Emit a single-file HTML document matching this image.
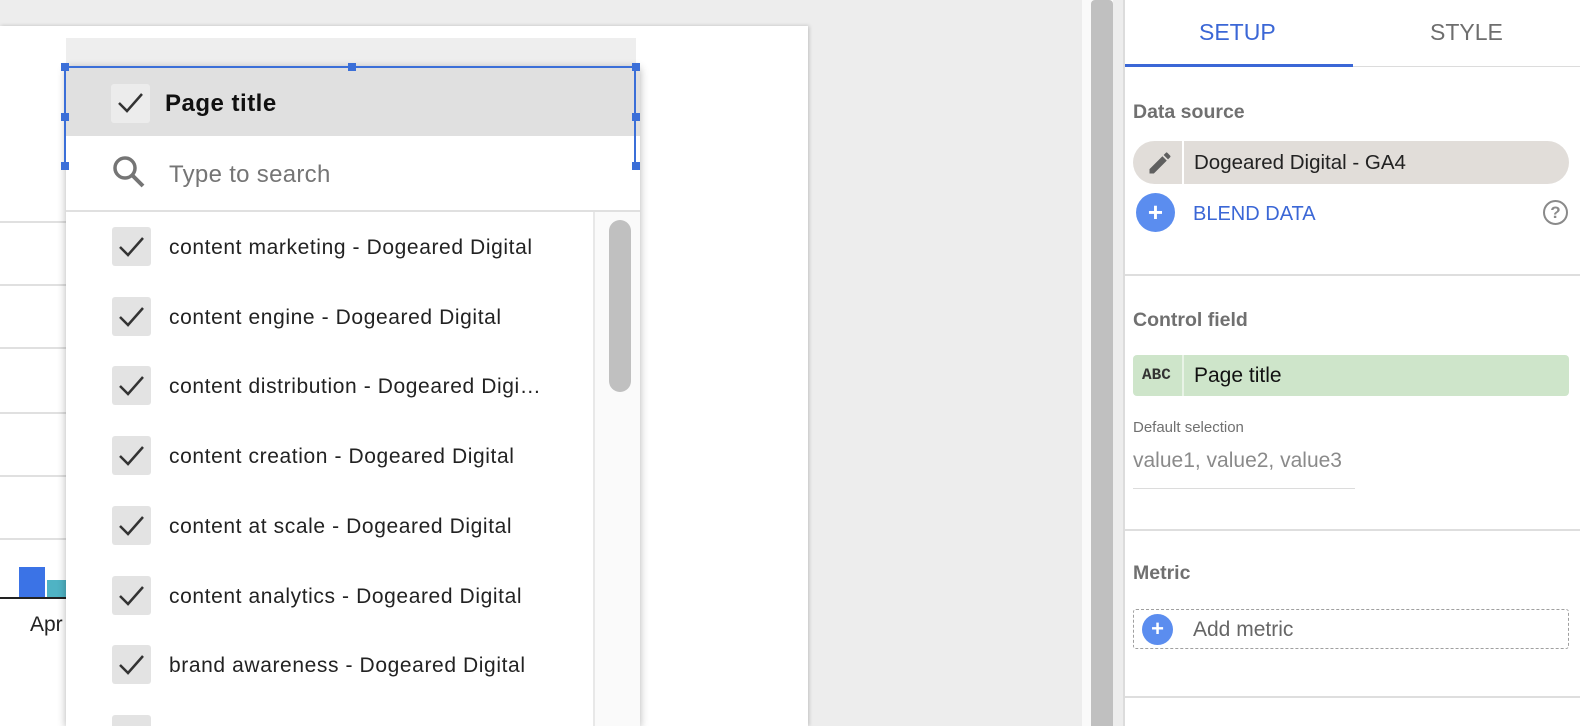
<!DOCTYPE html>
<html><head><meta charset="utf-8"><style>
*{margin:0;padding:0;box-sizing:border-box}
html,body{width:1580px;height:726px;overflow:hidden}
body{background:#ededed;font-family:"Liberation Sans",Arial,sans-serif;position:relative}
.a{position:absolute}
.canvas{left:0;top:26px;width:808px;height:700px;background:#fff;box-shadow:1px 0 4px rgba(0,0,0,.2)}
.hl{left:0;width:70px;height:2px;background:#e0e0e0}
.dd{left:66px;top:66px;width:574px;height:660px;background:#fff;box-shadow:0 2px 8px rgba(0,0,0,.3)}
.cb{width:39px;height:39px;background:#e3e3e3;border-radius:3px}
.item{left:112px;height:39px}
.item span{position:absolute;left:57px;top:9px;font-size:21px;letter-spacing:.6px;color:#222;white-space:nowrap}
.h{width:8px;height:8px;background:#3b6fd8}
.panel{left:1123px;top:0;width:457px;height:726px;background:#fff;border-left:2px solid #dcdcdc}
.lbl{font-size:19.5px;font-weight:bold;color:#707070}
.div{left:0;width:457px;height:2px;background:#dedede}
</style></head><body>
<div class="a canvas"></div>
<div class="a hl" style="top:221px"></div>
<div class="a hl" style="top:284px"></div>
<div class="a hl" style="top:347px"></div>
<div class="a hl" style="top:412px"></div>
<div class="a hl" style="top:475px"></div>
<div class="a hl" style="top:538px"></div>
<div class="a" style="left:19px;top:567px;width:26px;height:31px;background:#3b73e6"></div>
<div class="a" style="left:47px;top:580px;width:22px;height:18px;background:#4fb3c4"></div>
<div class="a" style="left:0;top:597px;width:70px;height:2px;background:#222"></div>
<div class="a" style="left:30px;top:613px;font-size:21px;color:#222">Apr</div>

<div class="a" style="left:66px;top:38px;width:570px;height:30px;background:#eeeeee"></div>
<div class="a dd">
  <div class="a" style="left:0;top:0;width:574px;height:70px;background:#e0e0e0"></div>
  <div class="a cb" style="left:45px;top:18px;background:#ececec"></div>
  <svg class="a" style="left:50px;top:24px" width="30" height="26" viewBox="0 0 30 26"><path d="M3 13 L11 21 L26 4" fill="none" stroke="#333" stroke-width="2.5"/></svg>
  <div class="a" style="left:99px;top:24px;font-size:24px;letter-spacing:.5px;font-weight:bold;color:#111">Page title</div>
  <svg class="a" style="left:45px;top:88px" width="36" height="36" viewBox="0 0 36 36"><circle cx="14" cy="14" r="10" fill="none" stroke="#757575" stroke-width="3.5"/><path d="M21 21 L32 32" stroke="#757575" stroke-width="4"/></svg>
  <div class="a" style="left:103px;top:95px;font-size:24px;letter-spacing:.3px;color:#757575">Type to search</div>
  <div class="a" style="left:0;top:144px;width:574px;height:2px;background:#e0e0e0"></div>
  <div class="a" style="left:527px;top:146px;width:47px;height:540px;background:#fafafa;border-left:2px solid #e8e8e8"></div>
  <div class="a" style="left:543px;top:154px;width:22px;height:172px;background:#c0c0c0;border-radius:11px"></div>
</div>
<div class="a" style="left:64px;top:66px;width:572px;height:102px;border:2px solid #3b6fd8;border-bottom:none"></div>
<div class="a h" style="left:61px;top:63px"></div><div class="a h" style="left:348px;top:63px"></div><div class="a h" style="left:632px;top:63px"></div>
<div class="a h" style="left:61px;top:113px"></div><div class="a h" style="left:632px;top:113px"></div>
<div class="a h" style="left:61px;top:162px"></div><div class="a h" style="left:632px;top:162px"></div>

<div class="a item" style="top:227px"><div class="a cb"></div><svg class="a" style="left:5px;top:7px" width="30" height="26"><path d="M3 13 L11 21 L26 4" fill="none" stroke="#333" stroke-width="2.5"/></svg><span>content marketing - Dogeared Digital</span></div>
<div class="a item" style="top:297px"><div class="a cb"></div><svg class="a" style="left:5px;top:7px" width="30" height="26"><path d="M3 13 L11 21 L26 4" fill="none" stroke="#333" stroke-width="2.5"/></svg><span>content engine - Dogeared Digital</span></div>
<div class="a item" style="top:366px"><div class="a cb"></div><svg class="a" style="left:5px;top:7px" width="30" height="26"><path d="M3 13 L11 21 L26 4" fill="none" stroke="#333" stroke-width="2.5"/></svg><span>content distribution - Dogeared Digi…</span></div>
<div class="a item" style="top:436px"><div class="a cb"></div><svg class="a" style="left:5px;top:7px" width="30" height="26"><path d="M3 13 L11 21 L26 4" fill="none" stroke="#333" stroke-width="2.5"/></svg><span>content creation - Dogeared Digital</span></div>
<div class="a item" style="top:506px"><div class="a cb"></div><svg class="a" style="left:5px;top:7px" width="30" height="26"><path d="M3 13 L11 21 L26 4" fill="none" stroke="#333" stroke-width="2.5"/></svg><span>content at scale - Dogeared Digital</span></div>
<div class="a item" style="top:576px"><div class="a cb"></div><svg class="a" style="left:5px;top:7px" width="30" height="26"><path d="M3 13 L11 21 L26 4" fill="none" stroke="#333" stroke-width="2.5"/></svg><span>content analytics - Dogeared Digital</span></div>
<div class="a item" style="top:645px"><div class="a cb"></div><svg class="a" style="left:5px;top:7px" width="30" height="26"><path d="M3 13 L11 21 L26 4" fill="none" stroke="#333" stroke-width="2.5"/></svg><span>brand awareness - Dogeared Digital</span></div>
<div class="a item" style="top:715px"><div class="a cb"></div></div>

<div class="a" style="left:1082px;top:0;width:31px;height:726px;background:#fafafa"></div>
<div class="a" style="left:1091px;top:0;width:22px;height:726px;background:#c0c0c0;border-radius:4px 4px 0 0"></div>

<div class="a panel">
  <div class="a" style="left:74px;top:19px;font-size:23px;color:#3b67d6">SETUP</div>
  <div class="a" style="left:305px;top:19px;font-size:23px;color:#6e6e6e">STYLE</div>
  <div class="a" style="left:0;top:66px;width:457px;height:1px;background:#dcdcdc"></div>
  <div class="a" style="left:0;top:64px;width:228px;height:3px;background:#3b67d6"></div>
  <div class="a lbl" style="left:8px;top:101px">Data source</div>
  <div class="a" style="left:8px;top:141px;width:436px;height:43px;background:#e1ddd9;border-radius:22px"></div>
  <div class="a" style="left:57px;top:141px;width:2px;height:43px;background:#fff"></div>
  <svg class="a" style="left:21px;top:149px" width="28" height="28" viewBox="0 0 24 24"><path d="M3 17.25V21h3.75L17.81 9.94l-3.75-3.75L3 17.25zM20.71 7.04a1 1 0 000-1.41l-2.34-2.34a1 1 0 00-1.41 0l-1.83 1.83 3.75 3.75 1.83-1.83z" fill="#5f5f5f"/></svg>
  <div class="a" style="left:69px;top:151px;font-size:20.5px;color:#222">Dogeared Digital - GA4</div>
  <div class="a" style="left:11px;top:193px;width:39px;height:39px;border-radius:50%;background:#5b8def;color:#fff;font-size:26px;font-weight:bold;text-align:center;line-height:38px">+</div>
  <div class="a" style="left:68px;top:203px;font-size:20px;color:#3b67d6">BLEND DATA</div>
  <div class="a" style="left:418px;top:200px;width:25px;height:25px;border:2px solid #8a8a8a;border-radius:50%;color:#8a8a8a;font-size:17px;font-weight:bold;text-align:center;line-height:21px">?</div>
  <div class="a div" style="top:274px"></div>
  <div class="a lbl" style="left:8px;top:309px">Control field</div>
  <div class="a" style="left:8px;top:355px;width:436px;height:41px;background:#cee5ca;border-radius:4px"></div>
  <div class="a" style="left:57px;top:355px;width:2px;height:41px;background:#e8f3e6"></div>
  <div class="a" style="left:17px;top:366px;font-size:16px;font-weight:bold;color:#333;font-family:'Liberation Mono',monospace">ABC</div>
  <div class="a" style="left:69px;top:364px;font-size:21px;color:#111">Page title</div>
  <div class="a" style="left:8px;top:419px;font-size:15px;color:#707070">Default selection</div>
  <div class="a" style="left:8px;top:449px;font-size:21px;color:#8a8a8a">value1, value2, value3</div>
  <div class="a" style="left:8px;top:488px;width:222px;height:1px;background:#dcdcdc"></div>
  <div class="a div" style="top:529px"></div>
  <div class="a lbl" style="left:8px;top:562px">Metric</div>
  <div class="a" style="left:8px;top:609px;width:436px;height:40px;border:1.5px dashed #a0a0a0;border-radius:3px"></div>
  <div class="a" style="left:17px;top:614px;width:31px;height:31px;border-radius:50%;background:#5b8def;color:#fff;font-size:22px;font-weight:bold;text-align:center;line-height:30px">+</div>
  <div class="a" style="left:68px;top:618px;font-size:21px;color:#666">Add metric</div>
  <div class="a div" style="top:696px"></div>
</div>
</body></html>
